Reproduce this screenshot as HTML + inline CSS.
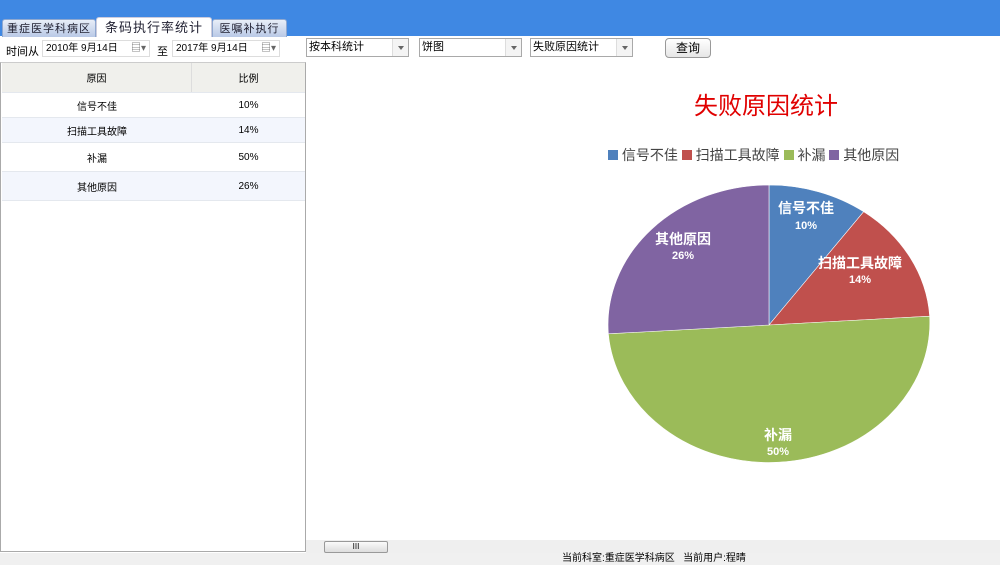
<!DOCTYPE html>
<html><head><meta charset="utf-8"><style>
*{margin:0;padding:0;box-sizing:border-box}
body{width:1000px;height:565px;overflow:hidden;background:#fff;font-family:"Liberation Sans","Noto Sans CJK SC",sans-serif;font-size:11px;color:#000;position:relative}
.top{position:absolute;left:0;top:0;width:1000px;height:36px;background:#3f88e3}
.tab{position:absolute;top:19px;height:18px;font-size:11px;text-align:center;line-height:18px;border:1px solid #8fa8d0;border-bottom:none;border-radius:3px 3px 0 0;background:linear-gradient(#e8eef8,#b9c9e6);color:#223;letter-spacing:1px}
.tab.act{top:17px;height:20px;background:#fff;font-size:13px;line-height:20px;border-color:#ccd}
.abs{position:absolute}
.sel{position:absolute;top:38px;height:19px;border:1px solid #a9a9a9;background:#fff;line-height:17px;padding-left:2px;font-size:11px}
.sel i{position:absolute;right:0;top:0;width:16px;height:17px;border-left:1px solid #ddd;background:#f4f4f4}
.sel i:after{content:"";position:absolute;left:5px;top:7px;border:3px solid transparent;border-top:4px solid #666}
.date{position:absolute;top:40px;height:17px;border:1px solid #ddd;line-height:15px;padding-left:3px;font-size:10px;background:#fff}
.row{position:absolute;left:2px;width:303px;border-bottom:1px solid #e4e8ee;font-size:10px}
.row span{position:absolute;top:0;bottom:0;display:flex;align-items:center;justify-content:center}
.a{left:0;width:190px}.b{left:190px;width:113px}
</style></head><body>
<div class="top"></div>
<div class="tab" style="left:2px;width:94px">重症医学科病区</div>
<div class="tab act" style="left:96px;width:116px">条码执行率统计</div>
<div class="tab" style="left:212px;width:75px">医嘱补执行</div>
<div class="abs" style="left:6px;top:43px">时间从</div>
<div class="date" style="left:42px;width:108px">2010年 9月14日 <span style="position:absolute;right:3px;color:#666">▤▾</span></div>
<div class="abs" style="left:157px;top:43px">至</div>
<div class="date" style="left:172px;width:108px">2017年 9月14日 <span style="position:absolute;right:3px;color:#666">▤▾</span></div>
<div class="sel" style="left:306px;width:103px">按本科统计<i></i></div>
<div class="sel" style="left:419px;width:103px">饼图<i></i></div>
<div class="sel" style="left:530px;width:103px">失败原因统计<i></i></div>
<div class="abs" style="left:665px;top:38px;width:46px;height:20px;border:1px solid #999;border-radius:4px;background:linear-gradient(#fff,#e6e6e6);text-align:center;line-height:18px;font-size:12px">查询</div>
<div class="abs" style="left:0;top:62px;width:306px;height:490px;border:1px solid #aaa;border-top:1px solid #ccc"></div>
<div class="row" style="top:63px;height:30px;background:#f0f0ec"><span class="a" style="border-right:1px solid #ddd">原因</span><span class="b">比例</span></div>
<div class="row" style="top:93px;height:25px"><span class="a">信号不佳</span><span class="b">10%</span></div>
<div class="row" style="top:118px;height:25px;background:#f3f6fd"><span class="a">扫描工具故障</span><span class="b">14%</span></div>
<div class="row" style="top:143px;height:29px"><span class="a">补漏</span><span class="b">50%</span></div>
<div class="row" style="top:172px;height:29px;background:#f3f6fd"><span class="a">其他原因</span><span class="b">26%</span></div>
<div class="abs" style="left:306px;top:540px;width:694px;height:13px;background:#efefef"></div>
<div class="abs" style="left:324px;top:541px;width:64px;height:12px;border:1px solid #999;border-radius:2px;background:linear-gradient(#fafafa,#ddd);font-size:8px;text-align:center;line-height:10px">III</div>
<div class="abs" style="left:0;top:553px;width:1000px;height:12px;background:#f0f0f0"></div>
<div class="abs" style="left:562px;top:553px;font-size:10px;line-height:12px">当前科室:重症医学科病区&nbsp;&nbsp;&nbsp;当前用户:程晴</div>
<div class="abs" style="left:694px;top:86px;font-size:24px;color:#e00000">失败原因统计</div>
<div class="abs" style="left:608px;top:146px;font-size:14px;color:#444;line-height:18px">
<span style="display:inline-block;width:10px;height:10px;background:#4f81bd"></span> 信号不佳 <span style="display:inline-block;width:10px;height:10px;background:#c0504d"></span> 扫描工具故障 <span style="display:inline-block;width:10px;height:10px;background:#9bbb59"></span> 补漏 <span style="display:inline-block;width:10px;height:10px;background:#8064a2"></span> 其他原因</div>
<svg class="abs" style="left:0;top:0" width="1000" height="565">
<g transform="translate(769,325) scale(1.15,1)" stroke="#fff" stroke-width="0.5">
<path d="M0 0L0 -140A140 140 0 0 1 82.3 -113.3Z" fill="#4f81bd"/>
<path d="M0 0L82.3 -113.3A140 140 0 0 1 139.7 -8.8Z" fill="#c0504d"/>
<path d="M0 0L139.7 -8.8A140 140 0 0 1 -139.7 8.8Z" fill="#9bbb59"/>
<path d="M0 0L-139.7 8.8A140 140 0 0 1 0 -140Z" fill="#8064a2"/>
</g>
<g fill="#fff" font-weight="bold" text-anchor="middle" font-family="Liberation Sans,Noto Sans CJK SC,sans-serif">
<text x="806" y="213" font-size="14">信号不佳</text><text x="806" y="229" font-size="11">10%</text>
<text x="860" y="268" font-size="14">扫描工具故障</text><text x="860" y="283" font-size="11">14%</text>
<text x="778" y="440" font-size="14">补漏</text><text x="778" y="455" font-size="11">50%</text>
<text x="683" y="244" font-size="14">其他原因</text><text x="683" y="259" font-size="11">26%</text>
</g>
</svg>
</body></html>
